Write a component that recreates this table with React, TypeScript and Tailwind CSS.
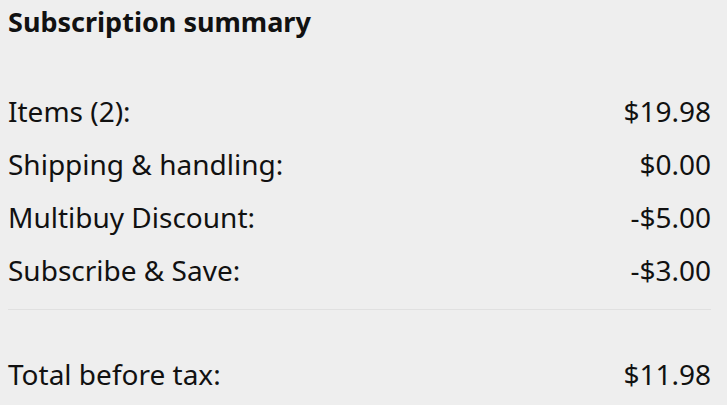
export default function App() {
  const rows = [
    { label: "Items (2):", value: "$19.98" },
    { label: "Shipping & handling:", value: "$0.00" },
    { label: "Multibuy Discount:", value: "-$5.00" },
    { label: "Subscribe & Save:", value: "-$3.00" },
  ];

  return (
    <div className="w-[727px] h-[405px] bg-[#eeeeee] text-[#111111] font-['Noto_Sans',sans-serif] pl-2 pr-4 overflow-hidden">
      <h2 className="text-[27px] font-bold leading-[44px]">Subscription summary</h2>

      <div className="mt-[41px]">
        {rows.map((r) => (
          <div key={r.label} className="flex justify-between text-[28px] leading-[53px]">
            <span>{r.label}</span>
            <span>{r.value}</span>
          </div>
        ))}
      </div>

      <div className="mt-[12px] border-t border-[#e0e0e0]" />

      <div className="mt-[38px] flex justify-between text-[28px] leading-[53px]">
        <span>Total before tax:</span>
        <span>$11.98</span>
      </div>
    </div>
  );
}
